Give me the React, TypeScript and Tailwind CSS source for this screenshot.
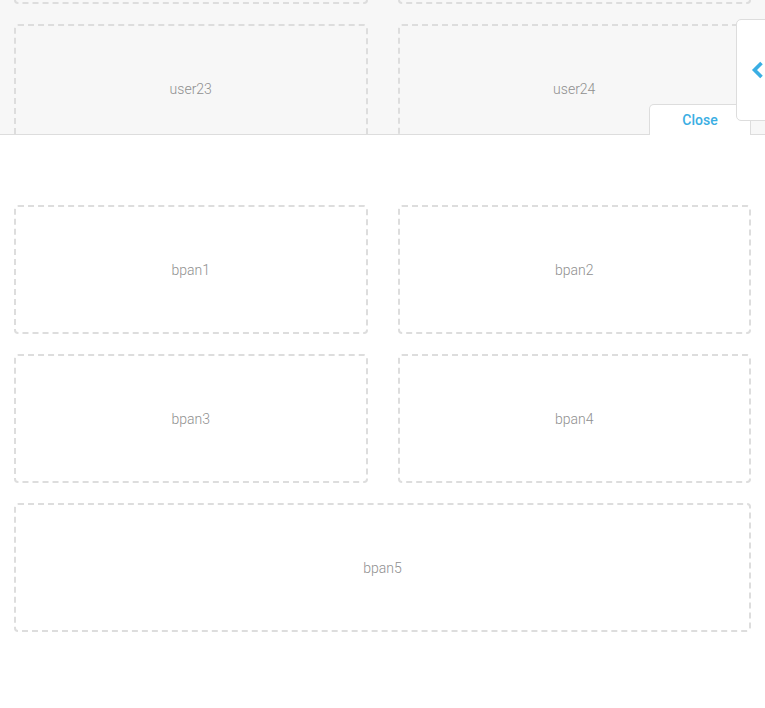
import React from "react";

function Card({ label, className = "" }: { label?: string; className?: string }) {
  return (
    <div
      className={`h-[129px] pt-[2px] rounded-[4px] border-2 border-dashed border-[#dddddd] flex items-center justify-center text-[14px] font-light text-[#8f8f8f] ${className}`}
    >
      {label}
    </div>
  );
}

export default function App() {
  return (
    <div
      className="relative w-[765px] h-[708px] bg-white overflow-hidden"
      style={{ fontFamily: "Roboto, 'Liberation Sans', sans-serif" }}
    >
      {/* Top panel */}
      <div className="relative h-[135px] bg-[#f7f7f7] border-b border-[#dddddd] overflow-hidden">
        <div className="mt-[-125px] px-[14px] grid grid-cols-2 gap-x-[30px] gap-y-[20px]">
          <Card />
          <Card />
          <Card label="user23" />
          <Card label="user24" />
        </div>
      </div>

      {/* Close tab */}
      <div className="absolute left-[649px] top-[104px] w-[102px] h-[31px] bg-white border border-b-0 border-[#dddddd] rounded-t-[5px] flex items-center justify-center text-[14px] font-medium text-[#3aaee3]">
        Close
      </div>

      {/* Side handle */}
      <div className="absolute left-[736px] top-[19px] w-[40px] h-[102px] bg-white border border-[#dddddd] rounded-[5px] flex items-center pl-[14px]">
        <svg width="13" height="18" viewBox="0 0 13 18">
          <path d="M10.5 2 L3.5 9 L10.5 16" fill="none" stroke="#3aaee3" strokeWidth="3.6" />
        </svg>
      </div>

      {/* Bottom panel */}
      <div className="pt-[70px] px-[14px] grid grid-cols-2 gap-x-[30px] gap-y-[20px]">
        <Card label="bpan1" />
        <Card label="bpan2" />
        <Card label="bpan3" />
        <Card label="bpan4" />
        <Card label="bpan5" className="col-span-2" />
      </div>
    </div>
  );
}
